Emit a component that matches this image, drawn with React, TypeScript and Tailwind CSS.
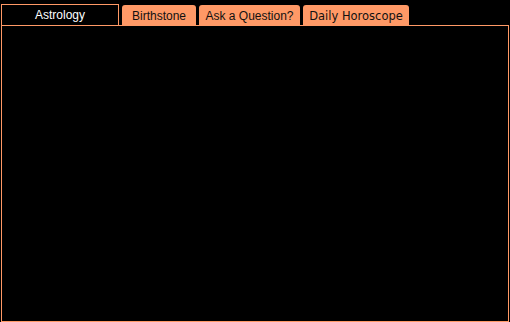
export default function App() {
  const tabs = [
    { label: "Birthstone", width: "w-[74px]", font: "font-['Liberation_Sans',Arial,sans-serif] text-[12px]" },
    { label: "Ask a Question?", width: "w-[101px]", font: "font-['Liberation_Sans',Arial,sans-serif] text-[12px]" },
    { label: "Daily Horoscope", width: "w-[106px]", font: "font-['DejaVu_Sans',Verdana,sans-serif] text-[11.5px]" },
  ];
  return (
    <div className="w-[510px] h-[322px] bg-black overflow-hidden">
      <div className="flex items-end h-[25px] pl-[1px]">
        <div className="w-[118px] h-[21px] border border-b-0 border-[#ff9966] text-center text-white font-['Liberation_Sans',Arial,sans-serif] text-[12px] leading-[14px] pt-[3px]">
          Astrology
        </div>
        <div className="flex items-end gap-[3px] ml-[3px]">
          {tabs.map((t) => (
            <div
              key={t.label}
              className={`${t.width} h-[20px] bg-[#ff9966] rounded-t-[3px] text-center text-[#111] leading-[14px] pt-[4px] whitespace-nowrap ${t.font}`}
            >
              {t.label}
            </div>
          ))}
        </div>
      </div>
      <div className="ml-[1px] w-[508px] h-[297px] border border-[#ff9966]"></div>
    </div>
  );
}
